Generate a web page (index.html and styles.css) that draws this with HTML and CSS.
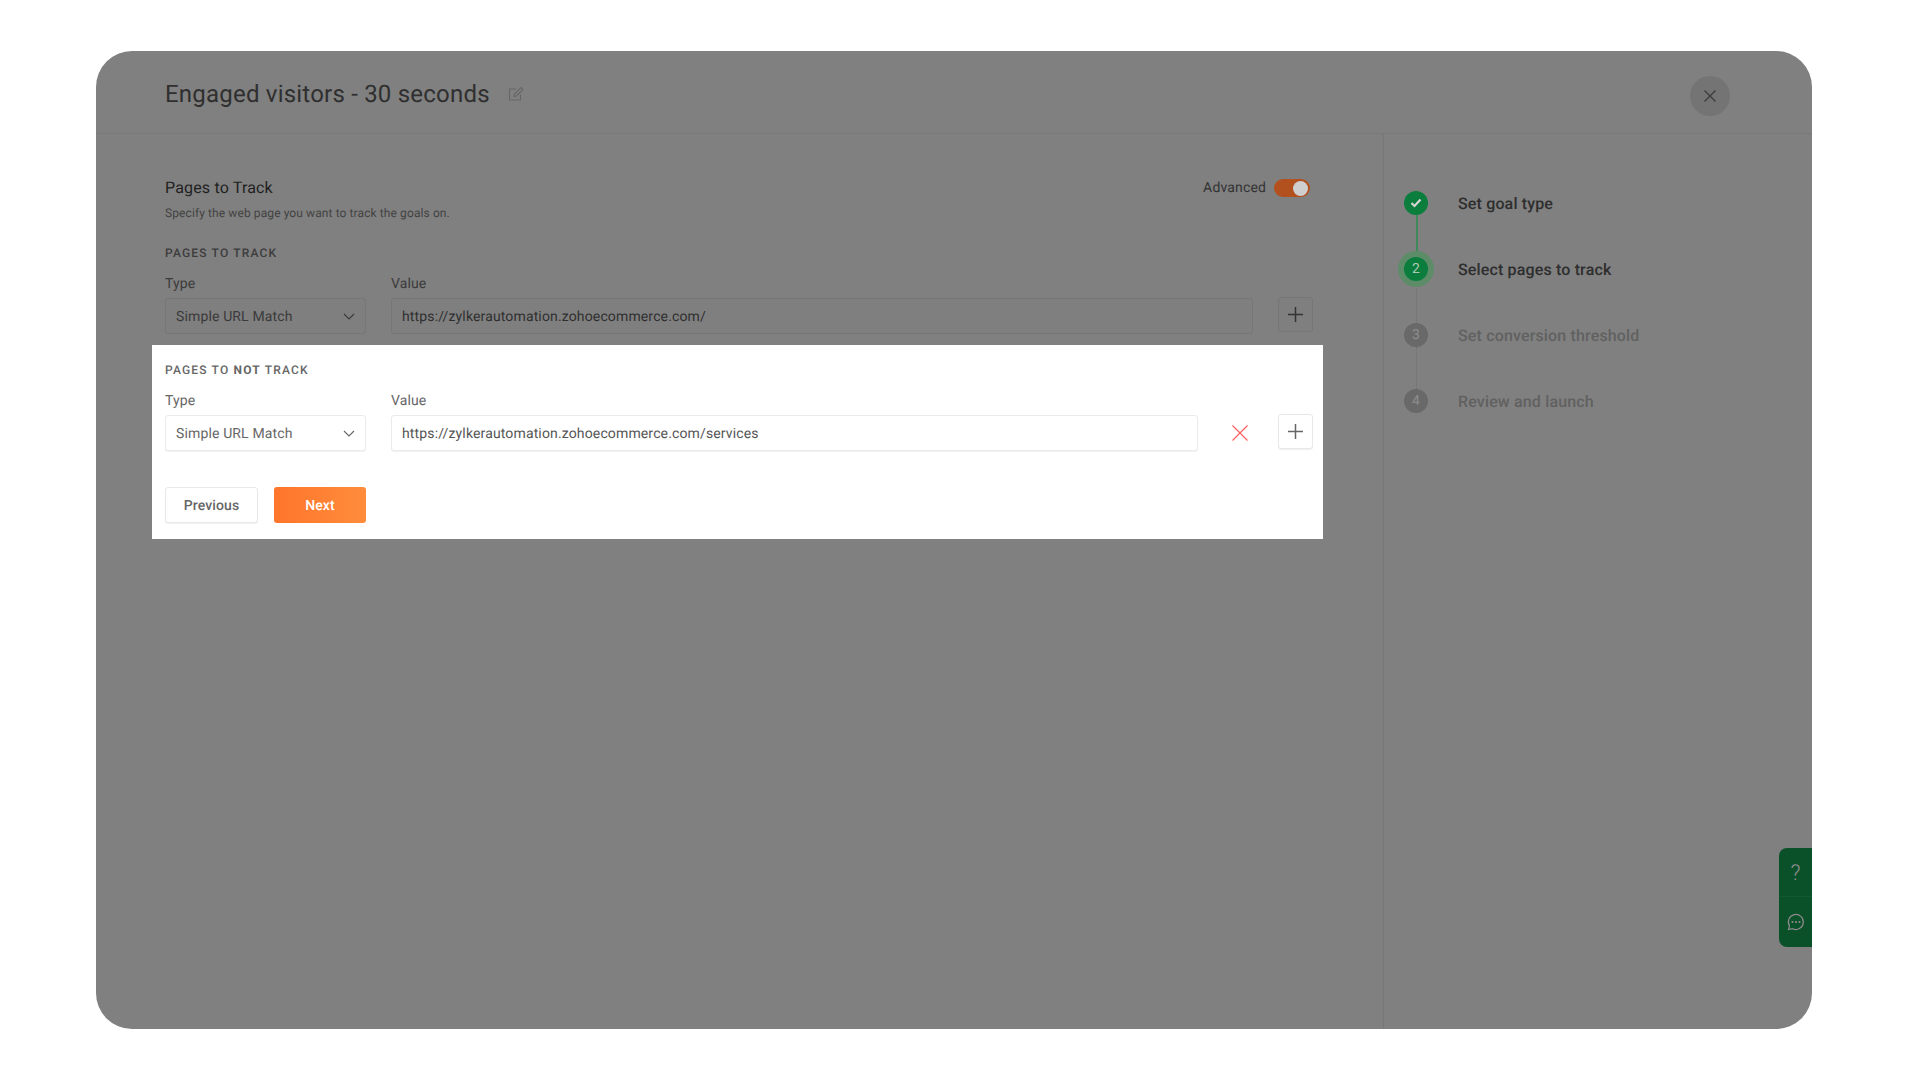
FILE: index.html
```html
<!DOCTYPE html>
<html lang="en">
<head>
<meta charset="utf-8">
<title>Engaged visitors - 30 seconds</title>
<link rel="stylesheet" href="styles.css">
</head>
<body>
<div class="modal">
  <header class="modal-head">
    <h1 class="goal-title">Engaged visitors - 30 seconds</h1>
    <svg class="edit-icon" width="16" height="16" viewBox="0 0 16 16" fill="none" stroke="currentColor" stroke-width="1.1">
      <path d="M12.5 8.5V14H1.5V3H8"/>
      <path d="M6 10.5l.5-2.5 6.5-6.5 2 2-6.5 6.5z"/>
    </svg>
    <button class="close-btn" aria-label="Close">
      <svg width="14" height="14" viewBox="0 0 14 14" fill="none" stroke="currentColor" stroke-width="1.4"><path d="M1.5 1.5l11 11M12.5 1.5l-11 11"/></svg>
    </button>
  </header>
  <div class="modal-body">
    <main class="main">
      <section class="block block-intro">
        <div class="intro-row">
          <div>
            <h2 class="intro-title">Pages to Track</h2>
            <p class="intro-sub">Specify the web page you want to track the goals on.</p>
          </div>
          <div class="advanced">
            <span>Advanced</span>
            <span class="toggle"><span class="knob"></span></span>
          </div>
        </div>
        <h3 class="group-title">PAGES TO TRACK</h3>
        <div class="fields">
          <div class="field-type">
            <div class="label">Type</div>
            <div class="control select">Simple URL Match
              <svg width="12" height="7" viewBox="0 0 12 7" fill="none" stroke="currentColor" stroke-width="1.1"><path d="M1 1l5 5 5-5"/></svg>
            </div>
          </div>
          <div class="field-value">
            <div class="label">Value</div>
            <div class="control">https://zylkerautomation.zohoecommerce.com/</div>
          </div>
          <button class="add-btn" aria-label="Add">
            <svg width="15" height="15" viewBox="0 0 15 15" stroke="currentColor" stroke-width="1.5"><path d="M7.5 0v15M0 7.5h15"/></svg>
          </button>
        </div>
      </section>

      <section class="block spot">
        <h3 class="group-title">PAGES TO <b>NOT</b> TRACK</h3>
        <div class="fields">
          <div class="field-type">
            <div class="label">Type</div>
            <div class="control select">Simple URL Match
              <svg width="12" height="7" viewBox="0 0 12 7" fill="none" stroke="currentColor" stroke-width="1.1"><path d="M1 1l5 5 5-5"/></svg>
            </div>
          </div>
          <div class="field-value">
            <div class="label">Value</div>
            <div class="control">https://zylkerautomation.zohoecommerce.com/services</div>
          </div>
          <button class="del-btn" aria-label="Remove">
            <svg width="16" height="16" viewBox="0 0 16 16" fill="none" stroke="currentColor" stroke-width="1.2"><path d="M.5.5l15 15M15.500.5l-15 15"/></svg>
          </button>
          <button class="add-btn" aria-label="Add">
            <svg width="15" height="15" viewBox="0 0 15 15" stroke="currentColor" stroke-width="1.5"><path d="M7.5 0v15M0 7.5h15"/></svg>
          </button>
        </div>
        <div class="actions">
          <button class="btn-prev">Previous</button>
          <button class="btn-next">Next</button>
        </div>
      </section>
    </main>

    <aside class="steps">
      <div class="step done">
        <span class="dot"><svg width="12" height="10" viewBox="0 0 12 10" fill="none" stroke="currentColor" stroke-width="2.2"><path d="M1.500 5l3 3 6-6.500"/></svg></span>
        <span class="step-name">Set goal type</span>
      </div>
      <div class="step current">
        <span class="dot">2</span>
        <span class="step-name">Select pages to track</span>
      </div>
      <div class="step todo">
        <span class="dot">3</span>
        <span class="step-name">Set conversion threshold</span>
      </div>
      <div class="step todo last">
        <span class="dot">4</span>
        <span class="step-name">Review and launch</span>
      </div>
    </aside>
  </div>

  <div class="help-tab">
    <div class="help-cell"><span class="qmark">?</span></div>
    <div class="help-cell">
      <svg width="20" height="20" viewBox="0 0 20 20" fill="none" stroke="currentColor" stroke-width="1.200"><path d="M2.500 17.500l1-3.500a7.500 7.500 0 1 1 3 2.700z"/><circle cx="6.500" cy="10" r=".5"/><circle cx="10" cy="10" r=".5"/><circle cx="13.500" cy="10" r=".5"/></svg>
    </div>
  </div>
</div>
</body>
</html>
```

FILE: styles.css
```css
* { box-sizing: border-box; }
html, body { margin: 0; height: 100%; background: #fff; }
body { font-family: Roboto, "Liberation Sans", sans-serif; overflow: hidden; text-rendering: geometricPrecision; }
h1, h2, h3, p { margin: 0; font-weight: 400; }
button { font-family: inherit; padding: 0; cursor: pointer; text-rendering: inherit; }

.modal {
  position: relative;
  width: 1716px;
  height: 978px;
  margin: 51px 0 0 96px;
  background: #808080;
  border-radius: 36px;
  overflow: hidden;
  display: flex;
  flex-direction: column;
}

.modal-head {
  height: 83px;
  flex: none;
  display: flex;
  align-items: center;
  padding: 3px 82px 0 69px;
  border-bottom: 1px solid #797979;
}
.goal-title { font-size: 24px; line-height: 30px; color: #2f2f2f; letter-spacing: .21px; }
.edit-icon { margin-left: 18px; color: #666; }
.close-btn {
  margin-left: auto;
  margin-top: 4px;
  width: 40px; height: 40px;
  border: 0; border-radius: 50%;
  background: #747474; color: #3d3d3d;
  display: flex; align-items: center; justify-content: center;
}

.modal-body { flex: 1; display: flex; min-height: 0; }
.main { width: 1288px; flex: none; padding-left: 56px; border-right: 1px solid #777; }
.block { width: 1171px; padding: 0 10px 0 13px; }
.block-intro { height: 211px; padding-top: 44px; }
.intro-row { display: flex; justify-content: space-between; }
.intro-title { font-size: 16px; line-height: 20px; color: #1f1f1f; letter-spacing: .17px; }
.intro-sub { font-size: 12px; line-height: 16px; margin-top: 7px; color: #434343; letter-spacing: .1px; }
.advanced { display: flex; align-items: center; gap: 8px; height: 20px; font-size: 14px; color: #333; padding-right: 3px; letter-spacing: .15px; }
.toggle { width: 36px; height: 18px; border-radius: 9px; background: #b2501e; display: flex; align-items: center; justify-content: flex-end; padding-right: 2px; }
.knob { width: 15px; height: 15px; border-radius: 50%; background: #cfcfcf; }

.group-title { font-size: 12px; line-height: 14px; letter-spacing: 1.17px; font-weight: 500; color: #3c3c3c; margin-top: 25px; }
.group-title b { font-weight: 700; }
.fields { display: flex; align-items: flex-end; margin-top: 15px; }
.field-type { width: 201px; flex: none; }
.field-value { flex: 1; margin-left: 25px; }
.label { font-size: 14px; line-height: 18px; color: #3b3b3b; margin-bottom: 5px; letter-spacing: .1px; }
.control {
  height: 36px;
  padding: 1px 10px 0;
  border: 1px solid #767676;
  border-radius: 3px;
  display: flex; align-items: center;
  font-size: 14px; color: #2f2f2f; letter-spacing: .14px;
  background: #7f7f7f;
}
.select { justify-content: space-between; color: #3a3a3a; }
.select svg { color: #3a3a3a; }
.add-btn {
  width: 35px; height: 35px; flex: none;
  margin: 0 0 2px 25px;
  border: 1px solid #767676; border-radius: 3px;
  background: #7f7f7f; color: #333;
  display: flex; align-items: center; justify-content: center;
}

.spot { background: #fff; height: 194px; padding-top: 18px; }
.spot .group-title { margin-top: 0; color: #666; }
.spot .label { color: #666; }
.spot .control { background: #fff; border-color: #ebebeb; color: #555; box-shadow: 0 1px 1px #f0f0f0; }
.spot .select { color: #666; }
.spot .select svg { color: #666; }
.spot .add-btn { background: #fff; border-color: #e8e8e8; color: #666; margin-left: 0; box-shadow: 0 1px 1px #f0f0f0; }
.del-btn {
  width: 80px; height: 36px; flex: none;
  padding: 0 0 0 4px;
  border: 0; background: none; color: #ff5f5f;
  display: flex; align-items: center; justify-content: center;
}
.actions { display: flex; gap: 16px; margin-top: 36px; }
.btn-prev, .btn-next { height: 36px; padding-top: 2px; border-radius: 3px; font-size: 14px; font-weight: 500; letter-spacing: .1px; }
.btn-prev { width: 93px; background: #fff; border: 1px solid #e8e8e8; color: #666; box-shadow: 0 1px 1px #f0f0f0; }
.btn-next { width: 92px; border: 0; color: #fff; background: linear-gradient(90deg, #ff752b, #ff8c3c); }

.steps { flex: 1; padding: 57px 0 0 20px; }
.step { position: relative; height: 66px; display: flex; align-items: flex-start; }
.dot {
  width: 24px; height: 24px; flex: none;
  border-radius: 50%;
  display: flex; align-items: center; justify-content: center;
  font-size: 14px;
  position: relative;
  z-index: 1;
}
.step-name { margin-left: 30px; font-size: 16px; line-height: 26px; font-weight: 500; letter-spacing: .15px; }
.step::after {
  content: "";
  position: absolute;
  left: 12px; top: 24px;
  height: 42px;
  border-left: 1px dotted #6f6f6f;
}
.step.last::after { display: none; }
.done .dot { background: #0b7d3d; color: #d5d5d5; }
.done .step-name, .current .step-name { color: #2e2e2e; }
.done::after { border-left: 2px solid #3f8a5b; }
.current .dot { background: #0b7d3d; color: #a9c9b4; box-shadow: 0 0 0 6px #5d8c68; }
.todo .dot { background: #696969; color: #8e8e8e; }
.todo .step-name { color: #616161; }

.help-tab {
  position: absolute;
  right: 0; top: 797px;
  width: 33px; height: 99px;
  background: #0a5029;
  border-radius: 8px 0 0 8px;
  color: #8b8b8b;
}
.help-cell { height: 50px; display: flex; align-items: center; justify-content: center; }
.help-cell:first-child { height: 49px; border-bottom: 1px solid #0f5a31; }
.qmark { font-size: 22px; line-height: 1; font-weight: 300; padding-top: 4px; color: #8b8b8b; }
```
